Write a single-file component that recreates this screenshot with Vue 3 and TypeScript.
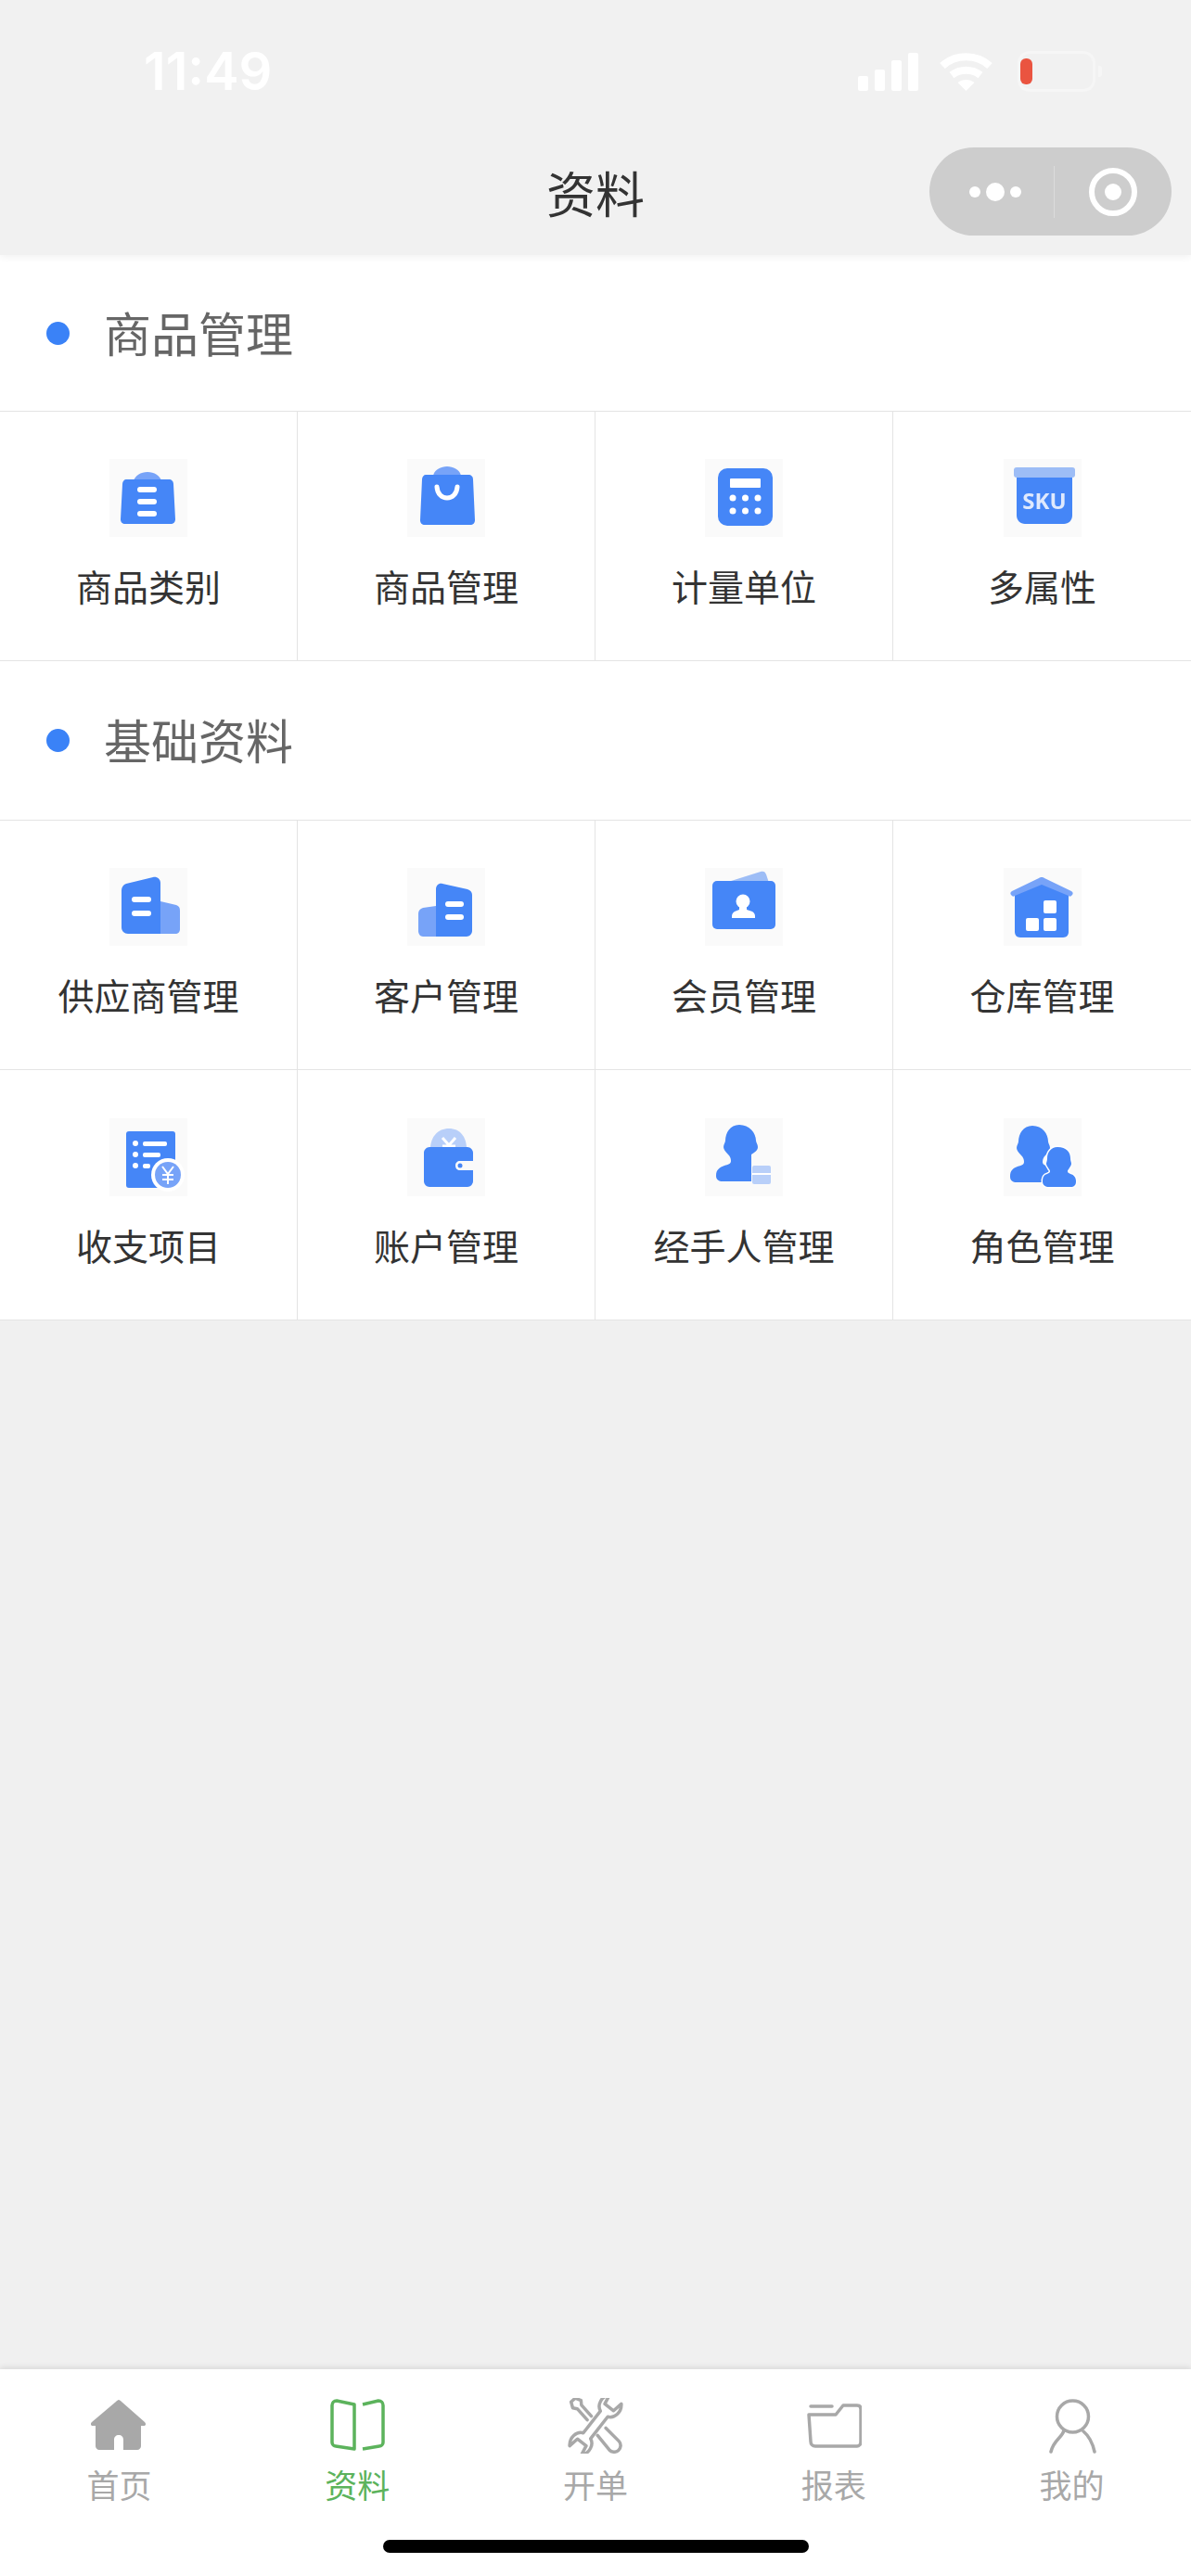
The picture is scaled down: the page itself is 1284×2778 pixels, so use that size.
<script setup lang="ts">
interface GridItem {
  label: string;
  icon: string;
}

interface Section {
  title: string;
  items: GridItem[];
}

interface Tab {
  label: string;
  icon: string;
  active?: boolean;
}

const BLUE = '#4586f7';
const MID = '#77a3f8';
const PALE = '#b8cff9';

// 84x84 icon artwork, each one sits on the pale square
const icons: Record<string, string> = {
  category: `
    <path d="M26 24c1-6 8-10 15-10s14 4 15 10z" fill="${MID}"/>
    <path d="M18 22h46c3 0 5 2 5 5l2 38c0 3-2 5-5 5H17c-3 0-5-2-5-5l2-38c0-3 2-5 4-5z" fill="${BLUE}"/>
    <g fill="#fff"><rect x="30" y="30" width="21" height="6" rx="3"/><rect x="30" y="43" width="21" height="6" rx="3"/><rect x="30" y="56" width="21" height="6" rx="3"/></g>`,
  goods: `
    <path d="M28 18c1-6 8-10 15-10s14 4 15 10z" fill="${MID}"/>
    <path d="M20 17h46c3 0 5 2 5 5l2 44c0 3-2 5-5 5H19c-3 0-5-2-5-5l2-44c0-3 2-5 4-5z" fill="${BLUE}"/>
    <path d="M32 30c1 16 21 16 22 0" fill="none" stroke="#fff" stroke-width="5" stroke-linecap="round"/>`,
  unit: `
    <rect x="14" y="10" width="59" height="62" rx="10" fill="${BLUE}"/>
    <rect x="27" y="21" width="33" height="10" rx="1" fill="#fff"/>
    <g fill="#fff"><circle cx="30" cy="42" r="3.5"/><circle cx="43.500" cy="42" r="3.5"/><circle cx="57" cy="42" r="3.5"/><circle cx="30" cy="56" r="3.500"/><circle cx="43.500" cy="56" r="3.500"/><circle cx="57" cy="56" r="3.500"/></g>`,
  sku: `
    <rect x="11" y="9" width="66" height="11" rx="3" fill="#9dbdf6"/>
    <path d="M14 20h60v41c0 5-4 9-9 9H23c-5 0-9-4-9-9z" fill="${BLUE}"/>
    <text x="44" y="54" text-anchor="middle" font-family="'Open Sans', sans-serif" font-weight="700" font-size="24" fill="#dfe9fd">SKU</text>`,
  supplier: `
    <path d="M55 36l17 4c3 1 4 3 4 6v20c0 3-2 5-5 5H55z" fill="${MID}"/>
    <path d="M13 24c0-3 2-6 5-7l29-7c4-1 8 2 8 6v55H20c-4 0-7-3-7-7z" fill="${BLUE}"/>
    <g fill="#fff"><rect x="24" y="31" width="21" height="6" rx="3"/><rect x="24" y="46" width="21" height="6" rx="3"/></g>`,
  customer: `
    <path d="M31 41l-14 2c-3 1-5 3-5 6v19c0 3 2 6 5 6h14z" fill="${MID}"/>
    <path d="M31 23c0-4 3-7 7-6l27 6c3 1 5 3 5 6v39c0 3-3 6-6 6H31z" fill="${BLUE}"/>
    <g fill="#fff"><rect x="41" y="36" width="20" height="6" rx="3"/><rect x="41" y="50" width="20" height="6" rx="3"/></g>`,
  member: `
    <path d="M25 15L60 4c3-1 5 0 6 3l3 9z" fill="#9dbdf6"/>
    <rect x="8" y="14" width="68" height="52" rx="5" fill="${BLUE}"/>
    <circle cx="41" cy="36" r="7.500" fill="#fff"/>
    <path d="M37 41h8v4l6 2c2 1 3 3 3 5v2H29v-2c0-2 1-4 3-5l5-2z" fill="#fff"/>`,
  warehouse: `
    <path d="M12 27l29-14 29 14v42c0 3-2 6-6 6H18c-4 0-6-3-6-6z" fill="${BLUE}"/>
    <path d="M41 10c1 0 2 0 3 1l29 14c2 1 2 3 1 4l-1 1c-1 1-2 1-3 0L41 18 12 30c-1 1-2 1-3 0l-1-1c-1-1-1-3 1-4l29-14c1-1 2-1 3-1z" fill="${MID}"/>
    <g fill="#fff"><rect x="43" y="35" width="14" height="14" rx="2"/><rect x="24" y="54" width="14" height="14" rx="2"/><rect x="43" y="54" width="14" height="14" rx="2"/></g>`,
  finance: `
    <rect x="18" y="14" width="53" height="61" rx="3" fill="${BLUE}"/>
    <g fill="#fff"><circle cx="28" cy="27" r="3"/><circle cx="28" cy="39" r="3"/><circle cx="28" cy="51" r="3"/><rect x="36" y="25" width="26" height="5" rx="2"/><rect x="36" y="37" width="19" height="5" rx="2"/><rect x="36" y="49" width="8" height="5" rx="2"/><circle cx="63" cy="61" r="18"/></g>
    <circle cx="63" cy="61" r="14" fill="${MID}"/>
    <path d="M57 52l6 8 6-8M63 60v11M57 61h12M57 66h12" fill="none" stroke="#fff" stroke-width="2"/>`,
  account: `
    <path d="M25 33c0-13 8-22 20-22s19 9 19 22z" fill="${PALE}"/>
    <path d="M38 21l7 8 7-8M45 29v4M38 30h14" fill="none" stroke="#fff" stroke-width="3"/>
    <path d="M24 31h41c3 0 6 3 6 6v9H57c-3 0-5 2-5 5s2 5 5 5h14v12c0 3-3 6-6 6H24c-3 0-6-3-6-6V37c0-3 3-6 6-6z" fill="${BLUE}"/>
    <circle cx="57" cy="51" r="2.500" fill="${BLUE}"/>`,
  handler: `
    <path d="M37 7c-10 0-15 9-15 17 0 2-2 4-2 7 0 2 2 5 5 8 2 2 3 4 3 7 0 3-3 4-7 5-5 2-9 4-9 11 0 4 3 6 7 6h31V39l3-2c3-2 4-4 4-6 0-3-2-5-2-7 0-8-7-17-18-17z" fill="${BLUE}"/>
    <rect x="51" y="51" width="20" height="20" rx="2" fill="${PALE}"/>
    <rect x="51" y="59" width="20" height="2" fill="#fff"/>`,
  role: `
    <path d="M31 8c-10 0-15 9-15 17 0 2-2 4-2 7 0 2 2 5 5 8 2 2 3 4 3 7 0 3-3 4-7 5-5 2-8 4-8 11 0 4 3 6 7 6h37c5 0 7-2 7-6 0-7-4-9-9-11-4-1-7-2-7-5 0-3 1-5 3-7 3-3 5-6 5-8 0-3-2-5-2-7 0-8-6-17-17-17z" fill="${BLUE}"/>
    <path d="M58 31c-7 0-11 6-11 12 0 3-1 4-1 6 0 2 2 4 3 6 2 2 1 4-2 5-4 1-5 4-5 8 0 4 3 6 7 6h23c4 0 6-2 6-6 0-4-2-7-6-8-3-1-4-3-2-5 1-2 3-4 3-6 0-2-1-3-1-6 0-6-4-12-14-12z" fill="${BLUE}" stroke="#fff" stroke-width="3" paint-order="stroke"/>`,
};

// 60x60 artwork for the tab bar
const tabIcons: Record<string, string> = {
  home: `<path fill-rule="evenodd" d="M30 2c1 0 2 1 3 2l25 22c2 2 1 4-1 4h-3v22c0 2-2 4-4 4H9c-2 0-4-2-4-4V30H2c-2 0-3-2-1-4L27 4c1-1 2-2 3-2zM25 56h10V45c0-3-2-5-5-5s-5 2-5 5z"/>`,
  book: `<g fill="none" stroke="currentColor" stroke-width="3.500" stroke-linejoin="round"><path d="M27 7L8 3C5 3 3 5 3 8v40c0 2 2 4 4 4l20 3z"/><path d="M36 7l17-4c3 0 5 2 5 5v40c0 2-2 4-4 4l-18 3"/></g>`,
  tools: `<g fill="none" stroke="currentColor" stroke-width="3.500" stroke-linejoin="round" stroke-linecap="round">
    <g transform="translate(30 29) rotate(38)"><path d="M-5-15C-12-18-14-28-8-35L-6-24H6L8-35C14-28 12-18 5-15V15C12 18 14 28 8 35L6 24H-6L-8 35C-14 28-12 18-5 15Z"/></g>
    <g transform="translate(30 29) rotate(-42)"><path d="M-3-10V-26L-6-30-3-36H3L6-30 3-26V-10"/><path d="M-6 10L-7 30A7 7 0 0 0 7 30L6 10"/></g></g>`,
  folder: `<g fill="none" stroke="currentColor" stroke-width="3.500" stroke-linecap="round" stroke-linejoin="round"><path d="M5 9h23"/><path d="M3 18h29l8-10h15c2 0 4 1 4 4v35c0 3-2 5-4 5H10c-3 0-5-2-5-5z"/></g>`,
  user: `<g fill="none" stroke="currentColor" stroke-width="3.500" stroke-linecap="round"><circle cx="30.500" cy="20" r="17"/><path d="M21 35c-2 8-11 10-14 23"/><path d="M42 36c6 5 10 13 12 22"/></g>`,
};

const sections: Section[] = [
  {
    title: '商品管理',
    items: [
      { label: '商品类别', icon: 'category' },
      { label: '商品管理', icon: 'goods' },
      { label: '计量单位', icon: 'unit' },
      { label: '多属性', icon: 'sku' },
    ],
  },
  {
    title: '基础资料',
    items: [
      { label: '供应商管理', icon: 'supplier' },
      { label: '客户管理', icon: 'customer' },
      { label: '会员管理', icon: 'member' },
      { label: '仓库管理', icon: 'warehouse' },
      { label: '收支项目', icon: 'finance' },
      { label: '账户管理', icon: 'account' },
      { label: '经手人管理', icon: 'handler' },
      { label: '角色管理', icon: 'role' },
    ],
  },
];

const tabs: Tab[] = [
  { label: '首页', icon: 'home' },
  { label: '资料', icon: 'book', active: true },
  { label: '开单', icon: 'tools' },
  { label: '报表', icon: 'folder' },
  { label: '我的', icon: 'user' },
];
</script>

<template>
  <div class="page">
    <header class="header">
      <div class="status-bar">
        <span class="time">11:49</span>
        <div class="status-icons">
          <svg width="65" height="41" viewBox="0 0 65 41" fill="#fff">
            <rect x="0" y="25" width="11" height="16" rx="2" />
            <rect x="18" y="18" width="11" height="23" rx="2" />
            <rect x="36" y="8" width="11" height="33" rx="2" />
            <rect x="54" y="0" width="11" height="41" rx="2" />
          </svg>
          <svg width="57" height="41" viewBox="0 0 57 41" fill="none" stroke="#fff" stroke-width="8">
            <path d="M3 14c14-13 37-13 51 0" />
            <path d="M13 24c9-7 22-7 31 0" />
            <path d="M28.500 41l-9-9c5-4 13-4 18 0z" fill="#fff" stroke="none" />
          </svg>
          <div class="battery">
            <div class="battery-body"><div class="battery-level"></div></div>
            <div class="battery-nub"></div>
          </div>
        </div>
      </div>
      <div class="nav-bar">
        <h1 class="title">资料</h1>
        <div class="capsule">
          <div class="capsule-part dots">
            <span class="dot small"></span>
            <span class="dot big"></span>
            <span class="dot small"></span>
          </div>
          <div class="capsule-line"></div>
          <div class="capsule-part">
            <span class="ring"><span class="ring-core"></span></span>
          </div>
        </div>
      </div>
    </header>

    <main class="content">
      <section v-for="section in sections" :key="section.title" class="section">
        <div class="section-head">
          <span class="section-dot"></span>
          <span class="section-title">{{ section.title }}</span>
        </div>
        <div class="grid">
          <div v-for="item in section.items" :key="item.label" class="cell">
            <svg class="cell-icon" viewBox="0 0 84 84" v-html="icons[item.icon]"></svg>
            <span class="cell-label">{{ item.label }}</span>
          </div>
        </div>
      </section>
    </main>

    <footer class="tabbar">
      <nav class="tabs">
        <div v-for="tab in tabs" :key="tab.label" class="tab" :class="{ active: tab.active }">
          <svg class="tab-icon" viewBox="0 0 60 60" fill="currentColor" v-html="tabIcons[tab.icon]"></svg>
          <span class="tab-label">{{ tab.label }}</span>
        </div>
      </nav>
      <div class="home-indicator"></div>
    </footer>
  </div>
</template>

<style scoped>
.page {
  height: 2778px;
  display: flex;
  flex-direction: column;
  background: #f0f0f0;
  font-family: "Noto Sans CJK SC", "Liberation Sans", sans-serif;
  overflow: hidden;
}

.header {
  height: 275px;
  flex: none;
  background: #f1f1f1;
  box-shadow: 0 2px 8px rgba(0, 0, 0, 0.06);
  position: relative;
  z-index: 1;
}

.status-bar {
  height: 159px;
  box-sizing: border-box;
  padding: 55px 96px 0 155px;
  display: flex;
  justify-content: space-between;
  align-items: flex-start;
}

.time {
  font-family: Inter, "Liberation Sans", sans-serif;
  font-size: 56px;
  line-height: 44px;
  font-weight: 600;
  color: #fff;
}

.status-icons {
  display: flex;
  align-items: center;
}

.status-icons svg + svg {
  margin-left: 23px;
}

.battery {
  display: flex;
  align-items: center;
  margin-left: 27px;
}

.battery-body {
  width: 84px;
  height: 44px;
  box-sizing: border-box;
  border: 3px solid rgba(255, 255, 255, 0.35);
  border-radius: 13px;
  padding: 5px 0;
  display: flex;
}

.battery-level {
  width: 13px;
  border-radius: 6px;
  background: #ea5440;
}

.battery-nub {
  width: 4px;
  height: 12px;
  margin-left: 3px;
  border-radius: 0 3px 3px 0;
  background: rgba(255, 255, 255, 0.4);
}

.nav-bar {
  height: 95px;
  padding: 0 21px;
  display: grid;
  grid-template-columns: 1fr auto 1fr;
  align-items: center;
}

.title {
  grid-column: 2;
  margin: 0;
  font-size: 53px;
  line-height: 60px;
  font-weight: 400;
  color: #333;
}

.capsule {
  grid-column: 3;
  justify-self: end;
  width: 261px;
  height: 95px;
  border-radius: 48px;
  background: #cdcdcd;
  display: flex;
  align-items: center;
}

.capsule-part {
  flex: 1;
  display: flex;
  align-items: center;
  justify-content: center;
  gap: 6px;
}

.capsule-part.dots {
  padding-left: 8px;
}

.capsule-line {
  width: 1px;
  height: 56px;
  background: #dcdcdc;
}

.dot {
  border-radius: 50%;
  background: #fff;
}

.dot.small {
  width: 12px;
  height: 12px;
}

.dot.big {
  width: 20px;
  height: 20px;
}

.ring {
  width: 52px;
  height: 52px;
  box-sizing: border-box;
  border: 6px solid #fff;
  border-radius: 50%;
  display: flex;
  align-items: center;
  justify-content: center;
}

.ring-core {
  width: 18px;
  height: 18px;
  border-radius: 50%;
  background: #fff;
}

.content {
  flex: 1;
}

.section {
  background: #fff;
}

.section-head {
  height: 171px;
  padding-left: 50px;
  display: flex;
  align-items: center;
  gap: 37px;
}

.section:first-child .section-head {
  height: 168px;
}

.section-dot {
  width: 25px;
  height: 25px;
  border-radius: 50%;
  background: #3a82f7;
}

.section-title {
  padding-bottom: 3px;
  font-size: 51px;
  line-height: 60px;
  color: #666;
}

.grid {
  display: grid;
  grid-template-columns: repeat(4, 321px);
  box-shadow: inset 0 1px 0 #e4e4e4;
}

.cell {
  height: 270px;
  box-sizing: border-box;
  padding-top: 52px;
  border-right: 1px solid #e4e4e4;
  border-bottom: 1px solid #e4e4e4;
  display: flex;
  flex-direction: column;
  align-items: center;
}

.cell:nth-child(4n) {
  border-right: 0;
}

.cell-icon {
  width: 84px;
  height: 84px;
  background: #fafafa;
  filter: blur(0.5px);
}

.cell-label {
  margin-top: 25px;
  font-size: 39px;
  line-height: 54px;
  color: #333;
}

.tabbar {
  flex: none;
  height: 223px;
  background: #fff;
  box-shadow: 0 -2px 6px rgba(0, 0, 0, 0.1);
  display: flex;
  flex-direction: column;
  align-items: center;
  position: relative;
}

.tabs {
  width: 100%;
  display: grid;
  grid-template-columns: repeat(5, 1fr);
  padding-top: 31px;
}

.tab {
  display: flex;
  flex-direction: column;
  align-items: center;
  color: #a8a8a8;
}

.tab.active {
  color: #5cb35c;
}

.tab-icon {
  width: 60px;
  height: 60px;
}

.tab-label {
  margin-top: 13px;
  font-size: 35px;
  line-height: 40px;
}

.home-indicator {
  width: 459px;
  height: 14px;
  margin-top: 40px;
  border-radius: 7px;
  background: #000;
}
</style>
